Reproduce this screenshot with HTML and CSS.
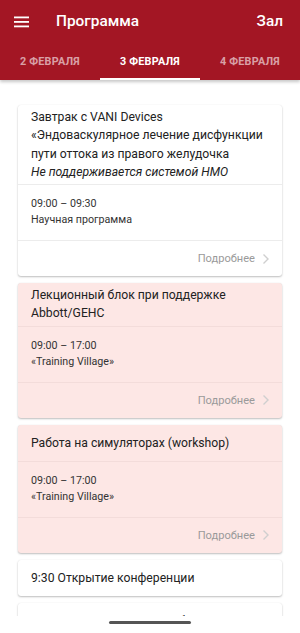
FILE: index.html
```html
<!DOCTYPE html>
<html lang="ru">
<head>
<meta charset="utf-8">
<title>Программа</title>
<link rel="stylesheet" href="styles.css">
</head>
<body>
<div class="app">
  <header class="appbar">
    <div class="toolbar">
      <svg class="menu" width="16" height="12" viewBox="0 0 16 12"><rect x="0" y="0.5" width="15" height="1.8" fill="#fff"/><rect x="0" y="5" width="15" height="1.8" fill="#fff"/><rect x="0" y="9.5" width="15" height="1.8" fill="#fff"/></svg>
      <span class="title">Программа</span>
      <span class="hall">Зал</span>
    </div>
    <nav class="tabs">
      <div class="tab">2 февраля</div>
      <div class="tab active">3 февраля</div>
      <div class="tab">4 февраля</div>
    </nav>
  </header>
  <main class="list">
    <article class="card">
      <div class="card-title">
        <div>Завтрак с VANI Devices<br>«Эндоваскулярное лечение дисфункции пути оттока из правого желудочка<br><i>Не поддерживается системой НМО</i></div>
      </div>
      <div class="card-info">
        <div>09:00 – 09:30</div>
        <div>Научная программа</div>
      </div>
      <div class="card-more">Подробнее <svg class="chev" width="8" height="12" viewBox="0 0 8 12"><path d="M1.5 1.5 L6 6 L1.5 10.5" fill="none" stroke="#cfcfcf" stroke-width="1.4"/></svg></div>
    </article>
    <article class="card pink">
      <div class="card-title">
        <div>Лекционный блок при поддержке Abbott/GEHC</div>
      </div>
      <div class="card-info">
        <div>09:00 – 17:00</div>
        <div>«Training Village»</div>
      </div>
      <div class="card-more">Подробнее <svg class="chev" width="8" height="12" viewBox="0 0 8 12"><path d="M1.5 1.5 L6 6 L1.5 10.5" fill="none" stroke="#cfcfcf" stroke-width="1.4"/></svg></div>
    </article>
    <article class="card pink">
      <div class="card-title">
        <div>Работа на симуляторах (workshop)</div>
      </div>
      <div class="card-info">
        <div>09:00 – 17:00</div>
        <div>«Training Village»</div>
      </div>
      <div class="card-more">Подробнее <svg class="chev" width="8" height="12" viewBox="0 0 8 12"><path d="M1.5 1.5 L6 6 L1.5 10.5" fill="none" stroke="#cfcfcf" stroke-width="1.4"/></svg></div>
    </article>
    <article class="card">
      <div class="card-title solo">
        <div>9:30 Открытие конференции</div>
      </div>
    </article>
    <article class="card">
      <div class="card-title">
        <div>Пленарное заседание «Гибридные и</div>
      </div>
    </article>
  </main>
  <footer class="navbar"><div class="home"></div></footer>
</div>
</body>
</html>
```
FILE: styles.css
```css
* { box-sizing: border-box; }
html, body { margin: 0; padding: 0; }
body {
  font-family: Roboto, "Noto Sans", sans-serif;
  color: #212121;
  background: #fff;
}
.app {
  width: 300px;
  height: 633px;
  display: flex;
  flex-direction: column;
  overflow: hidden;
}
.appbar {
  background: #a31624;
  color: #fff;
  position: relative;
  z-index: 2;
  box-shadow: 0 2px 3px rgba(0,0,0,0.22);
  flex: none;
}
.toolbar {
  height: 42px;
  display: flex;
  align-items: center;
  padding: 0 17px 0 14px;
}
.menu { display: block; margin-top: 1px; }
.title {
  margin-left: 26px;
  font-size: 15.4px;
  font-weight: 500;
  flex: 1;
}
.hall {
  font-size: 15.4px;
  font-weight: 500;
}
.tabs {
  display: flex;
  height: 38px;
}
.tab {
  flex: 1;
  display: flex;
  align-items: center;
  justify-content: center;
  text-transform: uppercase;
  font-size: 10.8px;
  font-weight: 700;
  letter-spacing: 0.2px;
  color: rgba(255,255,255,0.6);
  border-bottom: 2px solid transparent;
  padding-top: 2px;
}
.tab.active {
  color: #fff;
  border-bottom-color: #fff;
}
.list {
  flex: 1;
  overflow: hidden;
  padding: 25px 18px 0;
  display: flex;
  flex-direction: column;
  gap: 7px;
}
.card {
  background: #fff;
  border-radius: 3px;
  box-shadow: 0 1px 2px rgba(0,0,0,0.25), 0 0 1px rgba(0,0,0,0.08);
  flex: none;
}
.card.pink { background: #fde7e5; }
.card-title {
  min-height: 36px;
  padding: 3px 13px;
  display: flex;
  align-items: center;
  font-size: 12.2px;
  line-height: 18.3px;
  color: #222;
}
.card-info {
  border-top: 1px solid #ececec;
  padding: 11px 13px 12px;
  font-size: 10.7px;
  line-height: 16px;
  color: #333;
}
.pink .card-info { border-top-color: #f3dcda; }
.card-more {
  border-top: 1px solid #ececec;
  height: 36px;
  display: flex;
  align-items: center;
  justify-content: flex-end;
  padding-right: 12px;
  font-size: 11.1px;
  color: #9a9a9a;
  gap: 7px;
}
.pink .card-more { border-top-color: #f3dcda; }
.chev { display: block; }
.navbar {
  height: 17px;
  background: #fff;
  flex: none;
  display: flex;
  justify-content: center;
  position: relative;
  z-index: 2;
}
.home {
  width: 82px;
  height: 3px;
  border-radius: 2px;
  background: #555;
  margin-top: 5px;
}
```
